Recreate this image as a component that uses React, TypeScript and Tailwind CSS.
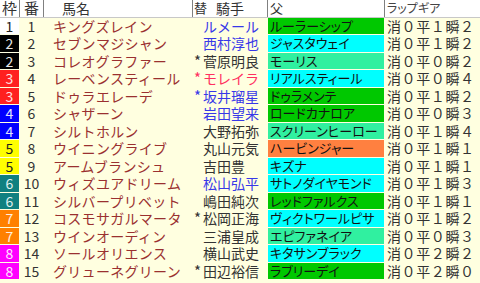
import React from "react";

type Row = {
  w: number;
  n: number;
  name: string;
  mark: boolean;
  jockey: string;
  jc: "b" | "r" | "d";
  sire: string;
  sc: "g" | "c" | "m" | "o";
  lap: string;
};

const rows: Row[] = [
  { w: 1, n: 1, name: "キングズレイン", mark: false, jockey: "ルメール", jc: "b", sire: "ルーラーシップ", sc: "g", lap: "消０平１瞬２" },
  { w: 2, n: 2, name: "セブンマジシャン", mark: false, jockey: "西村淳也", jc: "b", sire: "ジャスタウェイ", sc: "c", lap: "消０平１瞬２" },
  { w: 2, n: 3, name: "コレオグラファー", mark: true, jockey: "菅原明良", jc: "d", sire: "モーリス", sc: "m", lap: "消０平０瞬２" },
  { w: 3, n: 4, name: "レーベンスティール", mark: true, jockey: "モレイラ", jc: "r", sire: "リアルスティール", sc: "c", lap: "消０平０瞬４" },
  { w: 3, n: 5, name: "ドゥラエレーデ", mark: true, jockey: "坂井瑠星", jc: "b", sire: "ドゥラメンテ", sc: "g", lap: "消０平１瞬２" },
  { w: 4, n: 6, name: "シャザーン", mark: false, jockey: "岩田望来", jc: "b", sire: "ロードカナロア", sc: "g", lap: "消０平０瞬３" },
  { w: 4, n: 7, name: "シルトホルン", mark: false, jockey: "大野拓弥", jc: "d", sire: "スクリーンヒーロー", sc: "m", lap: "消０平１瞬４" },
  { w: 5, n: 8, name: "ウイニングライブ", mark: false, jockey: "丸山元気", jc: "d", sire: "ハービンジャー", sc: "o", lap: "消０平１瞬１" },
  { w: 5, n: 9, name: "アームブランシュ", mark: false, jockey: "吉田豊", jc: "d", sire: "キズナ", sc: "c", lap: "消０平１瞬１" },
  { w: 6, n: 10, name: "ウィズユアドリーム", mark: false, jockey: "松山弘平", jc: "b", sire: "サトノダイヤモンド", sc: "c", lap: "消０平１瞬３" },
  { w: 6, n: 11, name: "シルバープリベット", mark: false, jockey: "嶋田純次", jc: "d", sire: "レッドファルクス", sc: "g", lap: "消０平１瞬１" },
  { w: 7, n: 12, name: "コスモサガルマータ", mark: true, jockey: "松岡正海", jc: "d", sire: "ヴィクトワールピサ", sc: "c", lap: "消０平１瞬２" },
  { w: 7, n: 13, name: "ウインオーディン", mark: false, jockey: "三浦皇成", jc: "d", sire: "エピファネイア", sc: "m", lap: "消０平０瞬３" },
  { w: 8, n: 14, name: "ソールオリエンス", mark: false, jockey: "横山武史", jc: "d", sire: "キタサンブラック", sc: "c", lap: "消０平２瞬２" },
  { w: 8, n: 15, name: "グリューネグリーン", mark: true, jockey: "田辺裕信", jc: "d", sire: "ラブリーデイ", sc: "g", lap: "消０平２瞬０" },
];

const frameClass: Record<number, string> = {
  1: "bg-white text-[#222]",
  2: "bg-black text-[#e8e8e8]",
  3: "bg-[#ff2020] text-[#ffe0e0]",
  4: "bg-[#0000ff] text-[#e0e0ff]",
  5: "bg-[#ffff00] text-[#222]",
  6: "bg-[#108080] text-[#e0f0f0]",
  7: "bg-[#ff8000] text-[#fff0e0]",
  8: "bg-[#ff00ff] text-[#ffe8ff]",
};

const sireClass: Record<string, string> = {
  g: "bg-[#00c800]",
  c: "bg-[#00ffff]",
  m: "bg-[#30f0a0]",
  o: "bg-[#ff8040]",
};

const jockeyClass: Record<string, string> = {
  b: "text-[#3838e8]",
  r: "text-[#ff3060]",
  d: "text-[#333333]",
};

const font = "font-['Noto_Sans_CJK_JP','Noto_Sans_JP',sans-serif]";
const cols = "grid grid-cols-[19px_23px_148px_74px_116px_1fr]";

export default function App() {
  return (
    <div className={`w-[480px] h-[283px] bg-[#ffffe0] overflow-hidden ${font}`}>
      <div className={`${cols} gap-x-px bg-[#808080] h-[16.5px] border-b border-[#c8c8c8] box-content`}>
        <div className="bg-white flex items-center justify-center text-[15px] leading-[16px] text-[#333]">枠</div>
        <div className="bg-white flex items-center justify-center text-[15px] leading-[16px] text-[#333]">番</div>
        <div className="bg-white flex items-center pl-[18px] text-[14px] leading-[16px] text-[#333]">馬名</div>
        <div className="bg-white flex items-center pl-[1px] text-[14px] leading-[16px] text-[#333]">
          <span className="text-[13px]">替</span>
          <span className="ml-[9px]">騎手</span>
        </div>
        <div className="bg-white flex items-center pl-[2px] text-[13px] leading-[16px] text-[#333]">父</div>
        <div className="bg-white flex items-center pl-[2px] text-[12px] leading-[16px] text-[#444] [font-feature-settings:'palt']">ラップギア</div>
      </div>
      <div className={`${cols} gap-px auto-rows-[16.5px]`}>
        {rows.map((r) => (
          <React.Fragment key={r.n}>
            <div className={`${frameClass[r.w]} flex items-center justify-center text-[14px] leading-[16px]`}>{r.w}</div>
            <div className="flex items-center justify-center text-[14px] leading-[16px] text-[#333]">{r.n}</div>
            <div className="flex items-center pl-[9px] text-[14px] leading-[16px] tracking-[0.3px] text-[#9a3030] whitespace-nowrap overflow-hidden">{r.name}</div>
            <div className={`flex items-center text-[14px] leading-[16px] whitespace-nowrap ${jockeyClass[r.jc]}`}>
              <span className="w-[10px] pl-[1px] text-[15px] leading-[16px]">{r.mark ? "*" : ""}</span>
              <span>{r.jockey}</span>
            </div>
            <div className={`${sireClass[r.sc]} flex items-center pl-[2px] text-[13px] leading-[16px] text-[#111] whitespace-nowrap overflow-hidden [font-feature-settings:'palt']`}>{r.sire}</div>
            <div className="flex items-center pl-[2px] text-[14px] leading-[16px] tracking-[0.6px] text-[#333] whitespace-nowrap">{r.lap}</div>
          </React.Fragment>
        ))}
      </div>
    </div>
  );
}
